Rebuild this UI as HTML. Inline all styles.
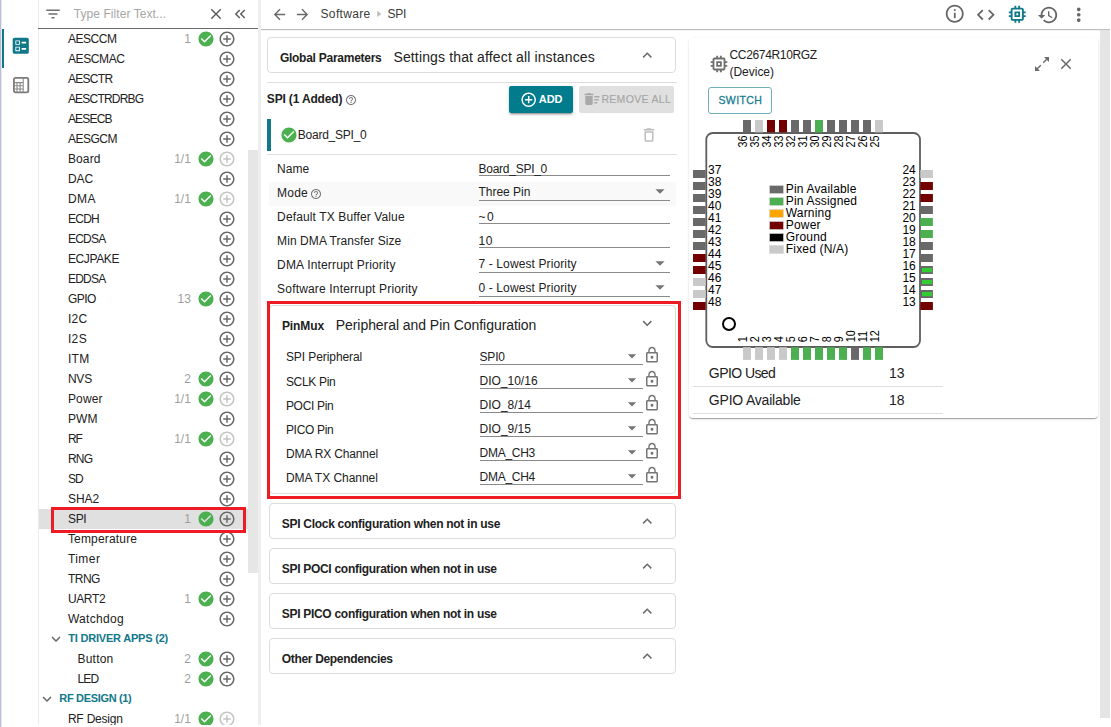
<!DOCTYPE html>
<html><head><meta charset="utf-8"><title>SysConfig</title>
<style>
html,body{margin:0;padding:0;background:#fff;}
body{width:1111px;height:727px;position:relative;overflow:hidden;font-family:"Liberation Sans", sans-serif;}
.a{position:absolute;display:block}
.t{position:absolute;white-space:pre;font-family:"Liberation Sans", sans-serif;}
</style></head><body>
<div class="a" style="left:0px;top:0px;width:1px;height:727px;background:#b9bdd8"></div>
<div class="a" style="left:1px;top:0px;width:1px;height:727px;background:#e9eaf2"></div>
<div class="a" style="left:2px;top:29px;width:2px;height:39px;background:#11788a"></div>
<svg class="a" style="left:10.25px;top:35.25px" width="21.5" height="21.5" viewBox="0 0 24 24"><path fill="#11788a" d="M13 9.5h5v-2h-5v2zm0 7h5v-2h-5v2zm6 4.5H5c-1.1 0-2-.9-2-2V5c0-1.1.9-2 2-2h14c1.1 0 2 .9 2 2v14c0 1.1-.9 2-2 2zM6 11h5V6H6v5zm1-4h3v3H7V7zM6 18h5v-5H6v5zm1-4h3v3H7v-3z"/></svg>
<svg class="a" style="left:12px;top:76px" width="18" height="18" viewBox="0 0 18 18"><rect x="1.9" y="1.9" width="14.4" height="14.4" rx="1.6" fill="none" stroke="#7a7a7a" stroke-width="1.8"/><path d="M11.2 2v14.2M2 6.6h9.2M5 6.6v9.6M8.1 6.6v9.6M2 9.8h9.2M2 13h9.2" fill="none" stroke="#8a8a8a" stroke-width="1.1"/></svg>
<div class="a" style="left:38px;top:0px;width:1px;height:727px;background:#ececec"></div>
<div class="a" style="left:38px;top:28px;width:220px;height:1px;background:#6a6a6a"></div>
<svg class="a" style="left:44.30px;top:5.00px" width="18" height="18" viewBox="0 0 24 24"><path fill="#6f6f6f" d="M10 18h4v-2h-4v2zM3 6v2h18V6H3zm3 7h12v-2H6v2z"/></svg>
<svg class="a" style="left:207.00px;top:5.20px" width="18" height="18" viewBox="0 0 24 24"><path fill="#5f5f5f" d="M19 6.41L17.59 5 12 10.59 6.41 5 5 6.41 10.59 12 5 17.59 6.41 19 12 13.41 17.59 19 19 17.59 13.41 12z"/></svg>
<svg class="a" style="left:231.30px;top:5.00px" width="18" height="18" viewBox="0 0 24 24"><path fill="#5f5f5f" d="M17.59 18L19 16.59 14.42 12 19 7.41 17.59 6l-6 6zM11 18l1.41-1.41L7.83 12l4.58-4.59L11 6l-6 6z"/></svg>
<div class="a" style="left:248px;top:150px;width:10px;height:423px;background:#e6e6e6"></div>
<div class="a" style="left:258px;top:0px;width:3px;height:727px;background:#eeeeee"></div>
<svg class="a" style="left:197.00px;top:30.00px" width="18" height="18" viewBox="0 0 24 24"><path fill="#4caf50" d="M12 2C6.48 2 2 6.48 2 12s4.48 10 10 10 10-4.48 10-10S17.52 2 12 2zm-2 15l-5-5 1.41-1.41L10 14.17l7.59-7.59L19 8l-9 9z"/></svg>
<svg class="a" style="left:218.00px;top:30.00px" width="18" height="18" viewBox="0 0 24 24"><path fill="#686868" d="M13 7h-2v4H7v2h4v4h2v-4h4v-2h-4V7zm-1-5C6.48 2 2 6.48 2 12s4.48 10 10 10 10-4.48 10-10S17.52 2 12 2zm0 18c-4.41 0-8-3.59-8-8s3.59-8 8-8 8 3.59 8 8-3.59 8-8 8z"/></svg>
<svg class="a" style="left:218.00px;top:50.00px" width="18" height="18" viewBox="0 0 24 24"><path fill="#686868" d="M13 7h-2v4H7v2h4v4h2v-4h4v-2h-4V7zm-1-5C6.48 2 2 6.48 2 12s4.48 10 10 10 10-4.48 10-10S17.52 2 12 2zm0 18c-4.41 0-8-3.59-8-8s3.59-8 8-8 8 3.59 8 8-3.59 8-8 8z"/></svg>
<svg class="a" style="left:218.00px;top:70.00px" width="18" height="18" viewBox="0 0 24 24"><path fill="#686868" d="M13 7h-2v4H7v2h4v4h2v-4h4v-2h-4V7zm-1-5C6.48 2 2 6.48 2 12s4.48 10 10 10 10-4.48 10-10S17.52 2 12 2zm0 18c-4.41 0-8-3.59-8-8s3.59-8 8-8 8 3.59 8 8-3.59 8-8 8z"/></svg>
<svg class="a" style="left:218.00px;top:90.00px" width="18" height="18" viewBox="0 0 24 24"><path fill="#686868" d="M13 7h-2v4H7v2h4v4h2v-4h4v-2h-4V7zm-1-5C6.48 2 2 6.48 2 12s4.48 10 10 10 10-4.48 10-10S17.52 2 12 2zm0 18c-4.41 0-8-3.59-8-8s3.59-8 8-8 8 3.59 8 8-3.59 8-8 8z"/></svg>
<svg class="a" style="left:218.00px;top:110.00px" width="18" height="18" viewBox="0 0 24 24"><path fill="#686868" d="M13 7h-2v4H7v2h4v4h2v-4h4v-2h-4V7zm-1-5C6.48 2 2 6.48 2 12s4.48 10 10 10 10-4.48 10-10S17.52 2 12 2zm0 18c-4.41 0-8-3.59-8-8s3.59-8 8-8 8 3.59 8 8-3.59 8-8 8z"/></svg>
<svg class="a" style="left:218.00px;top:130.00px" width="18" height="18" viewBox="0 0 24 24"><path fill="#686868" d="M13 7h-2v4H7v2h4v4h2v-4h4v-2h-4V7zm-1-5C6.48 2 2 6.48 2 12s4.48 10 10 10 10-4.48 10-10S17.52 2 12 2zm0 18c-4.41 0-8-3.59-8-8s3.59-8 8-8 8 3.59 8 8-3.59 8-8 8z"/></svg>
<svg class="a" style="left:197.00px;top:150.00px" width="18" height="18" viewBox="0 0 24 24"><path fill="#4caf50" d="M12 2C6.48 2 2 6.48 2 12s4.48 10 10 10 10-4.48 10-10S17.52 2 12 2zm-2 15l-5-5 1.41-1.41L10 14.17l7.59-7.59L19 8l-9 9z"/></svg>
<svg class="a" style="left:218.00px;top:150.00px" width="18" height="18" viewBox="0 0 24 24"><path fill="#c4c4c4" d="M13 7h-2v4H7v2h4v4h2v-4h4v-2h-4V7zm-1-5C6.48 2 2 6.48 2 12s4.48 10 10 10 10-4.48 10-10S17.52 2 12 2zm0 18c-4.41 0-8-3.59-8-8s3.59-8 8-8 8 3.59 8 8-3.59 8-8 8z"/></svg>
<svg class="a" style="left:218.00px;top:170.00px" width="18" height="18" viewBox="0 0 24 24"><path fill="#686868" d="M13 7h-2v4H7v2h4v4h2v-4h4v-2h-4V7zm-1-5C6.48 2 2 6.48 2 12s4.48 10 10 10 10-4.48 10-10S17.52 2 12 2zm0 18c-4.41 0-8-3.59-8-8s3.59-8 8-8 8 3.59 8 8-3.59 8-8 8z"/></svg>
<svg class="a" style="left:197.00px;top:190.00px" width="18" height="18" viewBox="0 0 24 24"><path fill="#4caf50" d="M12 2C6.48 2 2 6.48 2 12s4.48 10 10 10 10-4.48 10-10S17.52 2 12 2zm-2 15l-5-5 1.41-1.41L10 14.17l7.59-7.59L19 8l-9 9z"/></svg>
<svg class="a" style="left:218.00px;top:190.00px" width="18" height="18" viewBox="0 0 24 24"><path fill="#c4c4c4" d="M13 7h-2v4H7v2h4v4h2v-4h4v-2h-4V7zm-1-5C6.48 2 2 6.48 2 12s4.48 10 10 10 10-4.48 10-10S17.52 2 12 2zm0 18c-4.41 0-8-3.59-8-8s3.59-8 8-8 8 3.59 8 8-3.59 8-8 8z"/></svg>
<svg class="a" style="left:218.00px;top:210.00px" width="18" height="18" viewBox="0 0 24 24"><path fill="#686868" d="M13 7h-2v4H7v2h4v4h2v-4h4v-2h-4V7zm-1-5C6.48 2 2 6.48 2 12s4.48 10 10 10 10-4.48 10-10S17.52 2 12 2zm0 18c-4.41 0-8-3.59-8-8s3.59-8 8-8 8 3.59 8 8-3.59 8-8 8z"/></svg>
<svg class="a" style="left:218.00px;top:230.00px" width="18" height="18" viewBox="0 0 24 24"><path fill="#686868" d="M13 7h-2v4H7v2h4v4h2v-4h4v-2h-4V7zm-1-5C6.48 2 2 6.48 2 12s4.48 10 10 10 10-4.48 10-10S17.52 2 12 2zm0 18c-4.41 0-8-3.59-8-8s3.59-8 8-8 8 3.59 8 8-3.59 8-8 8z"/></svg>
<svg class="a" style="left:218.00px;top:250.00px" width="18" height="18" viewBox="0 0 24 24"><path fill="#686868" d="M13 7h-2v4H7v2h4v4h2v-4h4v-2h-4V7zm-1-5C6.48 2 2 6.48 2 12s4.48 10 10 10 10-4.48 10-10S17.52 2 12 2zm0 18c-4.41 0-8-3.59-8-8s3.59-8 8-8 8 3.59 8 8-3.59 8-8 8z"/></svg>
<svg class="a" style="left:218.00px;top:270.00px" width="18" height="18" viewBox="0 0 24 24"><path fill="#686868" d="M13 7h-2v4H7v2h4v4h2v-4h4v-2h-4V7zm-1-5C6.48 2 2 6.48 2 12s4.48 10 10 10 10-4.48 10-10S17.52 2 12 2zm0 18c-4.41 0-8-3.59-8-8s3.59-8 8-8 8 3.59 8 8-3.59 8-8 8z"/></svg>
<svg class="a" style="left:197.00px;top:290.00px" width="18" height="18" viewBox="0 0 24 24"><path fill="#4caf50" d="M12 2C6.48 2 2 6.48 2 12s4.48 10 10 10 10-4.48 10-10S17.52 2 12 2zm-2 15l-5-5 1.41-1.41L10 14.17l7.59-7.59L19 8l-9 9z"/></svg>
<svg class="a" style="left:218.00px;top:290.00px" width="18" height="18" viewBox="0 0 24 24"><path fill="#686868" d="M13 7h-2v4H7v2h4v4h2v-4h4v-2h-4V7zm-1-5C6.48 2 2 6.48 2 12s4.48 10 10 10 10-4.48 10-10S17.52 2 12 2zm0 18c-4.41 0-8-3.59-8-8s3.59-8 8-8 8 3.59 8 8-3.59 8-8 8z"/></svg>
<svg class="a" style="left:218.00px;top:310.00px" width="18" height="18" viewBox="0 0 24 24"><path fill="#686868" d="M13 7h-2v4H7v2h4v4h2v-4h4v-2h-4V7zm-1-5C6.48 2 2 6.48 2 12s4.48 10 10 10 10-4.48 10-10S17.52 2 12 2zm0 18c-4.41 0-8-3.59-8-8s3.59-8 8-8 8 3.59 8 8-3.59 8-8 8z"/></svg>
<svg class="a" style="left:218.00px;top:330.00px" width="18" height="18" viewBox="0 0 24 24"><path fill="#686868" d="M13 7h-2v4H7v2h4v4h2v-4h4v-2h-4V7zm-1-5C6.48 2 2 6.48 2 12s4.48 10 10 10 10-4.48 10-10S17.52 2 12 2zm0 18c-4.41 0-8-3.59-8-8s3.59-8 8-8 8 3.59 8 8-3.59 8-8 8z"/></svg>
<svg class="a" style="left:218.00px;top:350.00px" width="18" height="18" viewBox="0 0 24 24"><path fill="#686868" d="M13 7h-2v4H7v2h4v4h2v-4h4v-2h-4V7zm-1-5C6.48 2 2 6.48 2 12s4.48 10 10 10 10-4.48 10-10S17.52 2 12 2zm0 18c-4.41 0-8-3.59-8-8s3.59-8 8-8 8 3.59 8 8-3.59 8-8 8z"/></svg>
<svg class="a" style="left:197.00px;top:370.00px" width="18" height="18" viewBox="0 0 24 24"><path fill="#4caf50" d="M12 2C6.48 2 2 6.48 2 12s4.48 10 10 10 10-4.48 10-10S17.52 2 12 2zm-2 15l-5-5 1.41-1.41L10 14.17l7.59-7.59L19 8l-9 9z"/></svg>
<svg class="a" style="left:218.00px;top:370.00px" width="18" height="18" viewBox="0 0 24 24"><path fill="#686868" d="M13 7h-2v4H7v2h4v4h2v-4h4v-2h-4V7zm-1-5C6.48 2 2 6.48 2 12s4.48 10 10 10 10-4.48 10-10S17.52 2 12 2zm0 18c-4.41 0-8-3.59-8-8s3.59-8 8-8 8 3.59 8 8-3.59 8-8 8z"/></svg>
<svg class="a" style="left:197.00px;top:390.00px" width="18" height="18" viewBox="0 0 24 24"><path fill="#4caf50" d="M12 2C6.48 2 2 6.48 2 12s4.48 10 10 10 10-4.48 10-10S17.52 2 12 2zm-2 15l-5-5 1.41-1.41L10 14.17l7.59-7.59L19 8l-9 9z"/></svg>
<svg class="a" style="left:218.00px;top:390.00px" width="18" height="18" viewBox="0 0 24 24"><path fill="#c4c4c4" d="M13 7h-2v4H7v2h4v4h2v-4h4v-2h-4V7zm-1-5C6.48 2 2 6.48 2 12s4.48 10 10 10 10-4.48 10-10S17.52 2 12 2zm0 18c-4.41 0-8-3.59-8-8s3.59-8 8-8 8 3.59 8 8-3.59 8-8 8z"/></svg>
<svg class="a" style="left:218.00px;top:410.00px" width="18" height="18" viewBox="0 0 24 24"><path fill="#686868" d="M13 7h-2v4H7v2h4v4h2v-4h4v-2h-4V7zm-1-5C6.48 2 2 6.48 2 12s4.48 10 10 10 10-4.48 10-10S17.52 2 12 2zm0 18c-4.41 0-8-3.59-8-8s3.59-8 8-8 8 3.59 8 8-3.59 8-8 8z"/></svg>
<svg class="a" style="left:197.00px;top:430.00px" width="18" height="18" viewBox="0 0 24 24"><path fill="#4caf50" d="M12 2C6.48 2 2 6.48 2 12s4.48 10 10 10 10-4.48 10-10S17.52 2 12 2zm-2 15l-5-5 1.41-1.41L10 14.17l7.59-7.59L19 8l-9 9z"/></svg>
<svg class="a" style="left:218.00px;top:430.00px" width="18" height="18" viewBox="0 0 24 24"><path fill="#c4c4c4" d="M13 7h-2v4H7v2h4v4h2v-4h4v-2h-4V7zm-1-5C6.48 2 2 6.48 2 12s4.48 10 10 10 10-4.48 10-10S17.52 2 12 2zm0 18c-4.41 0-8-3.59-8-8s3.59-8 8-8 8 3.59 8 8-3.59 8-8 8z"/></svg>
<svg class="a" style="left:218.00px;top:450.00px" width="18" height="18" viewBox="0 0 24 24"><path fill="#686868" d="M13 7h-2v4H7v2h4v4h2v-4h4v-2h-4V7zm-1-5C6.48 2 2 6.48 2 12s4.48 10 10 10 10-4.48 10-10S17.52 2 12 2zm0 18c-4.41 0-8-3.59-8-8s3.59-8 8-8 8 3.59 8 8-3.59 8-8 8z"/></svg>
<svg class="a" style="left:218.00px;top:470.00px" width="18" height="18" viewBox="0 0 24 24"><path fill="#686868" d="M13 7h-2v4H7v2h4v4h2v-4h4v-2h-4V7zm-1-5C6.48 2 2 6.48 2 12s4.48 10 10 10 10-4.48 10-10S17.52 2 12 2zm0 18c-4.41 0-8-3.59-8-8s3.59-8 8-8 8 3.59 8 8-3.59 8-8 8z"/></svg>
<svg class="a" style="left:218.00px;top:490.00px" width="18" height="18" viewBox="0 0 24 24"><path fill="#686868" d="M13 7h-2v4H7v2h4v4h2v-4h4v-2h-4V7zm-1-5C6.48 2 2 6.48 2 12s4.48 10 10 10 10-4.48 10-10S17.52 2 12 2zm0 18c-4.41 0-8-3.59-8-8s3.59-8 8-8 8 3.59 8 8-3.59 8-8 8z"/></svg>
<div class="a" style="left:39px;top:509px;width:209px;height:20px;background:#e0e0e0"></div>
<svg class="a" style="left:197.00px;top:510.00px" width="18" height="18" viewBox="0 0 24 24"><path fill="#4caf50" d="M12 2C6.48 2 2 6.48 2 12s4.48 10 10 10 10-4.48 10-10S17.52 2 12 2zm-2 15l-5-5 1.41-1.41L10 14.17l7.59-7.59L19 8l-9 9z"/></svg>
<svg class="a" style="left:218.00px;top:510.00px" width="18" height="18" viewBox="0 0 24 24"><path fill="#686868" d="M13 7h-2v4H7v2h4v4h2v-4h4v-2h-4V7zm-1-5C6.48 2 2 6.48 2 12s4.48 10 10 10 10-4.48 10-10S17.52 2 12 2zm0 18c-4.41 0-8-3.59-8-8s3.59-8 8-8 8 3.59 8 8-3.59 8-8 8z"/></svg>
<svg class="a" style="left:218.00px;top:530.00px" width="18" height="18" viewBox="0 0 24 24"><path fill="#686868" d="M13 7h-2v4H7v2h4v4h2v-4h4v-2h-4V7zm-1-5C6.48 2 2 6.48 2 12s4.48 10 10 10 10-4.48 10-10S17.52 2 12 2zm0 18c-4.41 0-8-3.59-8-8s3.59-8 8-8 8 3.59 8 8-3.59 8-8 8z"/></svg>
<svg class="a" style="left:218.00px;top:550.00px" width="18" height="18" viewBox="0 0 24 24"><path fill="#686868" d="M13 7h-2v4H7v2h4v4h2v-4h4v-2h-4V7zm-1-5C6.48 2 2 6.48 2 12s4.48 10 10 10 10-4.48 10-10S17.52 2 12 2zm0 18c-4.41 0-8-3.59-8-8s3.59-8 8-8 8 3.59 8 8-3.59 8-8 8z"/></svg>
<svg class="a" style="left:218.00px;top:570.00px" width="18" height="18" viewBox="0 0 24 24"><path fill="#686868" d="M13 7h-2v4H7v2h4v4h2v-4h4v-2h-4V7zm-1-5C6.48 2 2 6.48 2 12s4.48 10 10 10 10-4.48 10-10S17.52 2 12 2zm0 18c-4.41 0-8-3.59-8-8s3.59-8 8-8 8 3.59 8 8-3.59 8-8 8z"/></svg>
<svg class="a" style="left:197.00px;top:590.00px" width="18" height="18" viewBox="0 0 24 24"><path fill="#4caf50" d="M12 2C6.48 2 2 6.48 2 12s4.48 10 10 10 10-4.48 10-10S17.52 2 12 2zm-2 15l-5-5 1.41-1.41L10 14.17l7.59-7.59L19 8l-9 9z"/></svg>
<svg class="a" style="left:218.00px;top:590.00px" width="18" height="18" viewBox="0 0 24 24"><path fill="#686868" d="M13 7h-2v4H7v2h4v4h2v-4h4v-2h-4V7zm-1-5C6.48 2 2 6.48 2 12s4.48 10 10 10 10-4.48 10-10S17.52 2 12 2zm0 18c-4.41 0-8-3.59-8-8s3.59-8 8-8 8 3.59 8 8-3.59 8-8 8z"/></svg>
<svg class="a" style="left:218.00px;top:610.00px" width="18" height="18" viewBox="0 0 24 24"><path fill="#686868" d="M13 7h-2v4H7v2h4v4h2v-4h4v-2h-4V7zm-1-5C6.48 2 2 6.48 2 12s4.48 10 10 10 10-4.48 10-10S17.52 2 12 2zm0 18c-4.41 0-8-3.59-8-8s3.59-8 8-8 8 3.59 8 8-3.59 8-8 8z"/></svg>
<svg class="a" style="left:47.10px;top:629.80px" width="18" height="18" viewBox="0 0 24 24"><path fill="#666" d="M16.59 8.59L12 13.17 7.41 8.59 6 10l6 6 6-6z"/></svg>
<svg class="a" style="left:197.00px;top:650.00px" width="18" height="18" viewBox="0 0 24 24"><path fill="#4caf50" d="M12 2C6.48 2 2 6.48 2 12s4.48 10 10 10 10-4.48 10-10S17.52 2 12 2zm-2 15l-5-5 1.41-1.41L10 14.17l7.59-7.59L19 8l-9 9z"/></svg>
<svg class="a" style="left:218.00px;top:650.00px" width="18" height="18" viewBox="0 0 24 24"><path fill="#686868" d="M13 7h-2v4H7v2h4v4h2v-4h4v-2h-4V7zm-1-5C6.48 2 2 6.48 2 12s4.48 10 10 10 10-4.48 10-10S17.52 2 12 2zm0 18c-4.41 0-8-3.59-8-8s3.59-8 8-8 8 3.59 8 8-3.59 8-8 8z"/></svg>
<svg class="a" style="left:197.00px;top:670.00px" width="18" height="18" viewBox="0 0 24 24"><path fill="#4caf50" d="M12 2C6.48 2 2 6.48 2 12s4.48 10 10 10 10-4.48 10-10S17.52 2 12 2zm-2 15l-5-5 1.41-1.41L10 14.17l7.59-7.59L19 8l-9 9z"/></svg>
<svg class="a" style="left:218.00px;top:670.00px" width="18" height="18" viewBox="0 0 24 24"><path fill="#686868" d="M13 7h-2v4H7v2h4v4h2v-4h4v-2h-4V7zm-1-5C6.48 2 2 6.48 2 12s4.48 10 10 10 10-4.48 10-10S17.52 2 12 2zm0 18c-4.41 0-8-3.59-8-8s3.59-8 8-8 8 3.59 8 8-3.59 8-8 8z"/></svg>
<svg class="a" style="left:38.10px;top:689.80px" width="18" height="18" viewBox="0 0 24 24"><path fill="#666" d="M16.59 8.59L12 13.17 7.41 8.59 6 10l6 6 6-6z"/></svg>
<svg class="a" style="left:197.00px;top:710.00px" width="18" height="18" viewBox="0 0 24 24"><path fill="#4caf50" d="M12 2C6.48 2 2 6.48 2 12s4.48 10 10 10 10-4.48 10-10S17.52 2 12 2zm-2 15l-5-5 1.41-1.41L10 14.17l7.59-7.59L19 8l-9 9z"/></svg>
<svg class="a" style="left:218.00px;top:710.00px" width="18" height="18" viewBox="0 0 24 24"><path fill="#c4c4c4" d="M13 7h-2v4H7v2h4v4h2v-4h4v-2h-4V7zm-1-5C6.48 2 2 6.48 2 12s4.48 10 10 10 10-4.48 10-10S17.52 2 12 2zm0 18c-4.41 0-8-3.59-8-8s3.59-8 8-8 8 3.59 8 8-3.59 8-8 8z"/></svg>
<div class="a" style="left:51px;top:507px;width:189px;height:20px;border:3px solid #ed1c24"></div>
<div class="a" style="left:261px;top:29px;width:849px;height:1px;background:#bdbdbd"></div>
<div class="a" style="left:261px;top:30px;width:839px;height:1px;background:#f4f4f4"></div>
<svg class="a" style="left:270.70px;top:5.50px" width="17" height="17" viewBox="0 0 24 24"><path fill="#6a6a6a" d="M20 11H7.83l5.59-5.59L12 4l-8 8 8 8 1.41-1.41L7.83 13H20v-2z"/></svg>
<svg class="a" style="left:294.30px;top:5.50px" width="17" height="17" viewBox="0 0 24 24"><path fill="#6a6a6a" d="M12 4l-1.41 1.41L16.17 11H4v2h12.17l-5.58 5.59L12 20l8-8z"/></svg>
<svg class="a" style="left:376px;top:9px" width="8" height="10" viewBox="0 0 8 10"><path d="M1.2 1.7L5.4 4.9L1.2 8.1z" fill="#bdbdbd"/></svg>
<svg class="a" style="left:944.25px;top:3.45px" width="21.5" height="21.5" viewBox="0 0 24 24"><path fill="#666" d="M11 17h2v-6h-2v6zm1-15C6.48 2 2 6.48 2 12s4.48 10 10 10 10-4.48 10-10S17.52 2 12 2zm0 18c-4.41 0-8-3.59-8-8s3.59-8 8-8 8 3.59 8 8-3.59 8-8 8zM11 9h2V7h-2v2z"/></svg>
<svg class="a" style="left:975.25px;top:3.75px" width="21.5" height="21.5" viewBox="0 0 24 24"><path fill="#666" d="M9.4 16.6L4.8 12l4.6-4.6L8 6l-6 6 6 6 1.4-1.4zm5.2 0l4.6-4.6-4.6-4.6L16 6l6 6-6 6-1.4-1.4z"/></svg>
<svg class="a" style="left:1005.95px;top:2.95px" width="22.5" height="22.5" viewBox="0 0 24 24"><path fill="#11788a" d="M15 9H9v6h6V9zm-2 4h-2v-2h2v2zm8-2V9h-2V7c0-1.1-.9-2-2-2h-2V3h-2v2h-2V3H9v2H7c-1.1 0-2 .9-2 2v2H3v2h2v2H3v2h2v2c0 1.1.9 2 2 2h2v2h2v-2h2v2h2v-2h2c1.1 0 2-.9 2-2v-2h2v-2h-2v-2h2zm-4 6H7V7h10v10z"/></svg>
<svg class="a" style="left:1036.80px;top:3.50px" width="22" height="22" viewBox="0 0 24 24"><path fill="#666" d="M13 3c-4.97 0-9 4.03-9 9H1l3.89 3.89.07.14L9 12H6c0-3.87 3.13-7 7-7s7 3.13 7 7-3.13 7-7 7c-1.93 0-3.68-.79-4.94-2.06l-1.42 1.42C8.27 19.99 10.51 21 13 21c4.97 0 9-4.03 9-9s-4.03-9-9-9zm-1 5v5l4.28 2.54.72-1.21-3.5-2.08V8H12z"/></svg>
<svg class="a" style="left:1068.25px;top:3.75px" width="21.5" height="21.5" viewBox="0 0 24 24"><path fill="#666" d="M12 8c1.1 0 2-.9 2-2s-.9-2-2-2-2 .9-2 2 .9 2 2 2zm0 2c-1.1 0-2 .9-2 2s.9 2 2 2 2-.9 2-2-.9-2-2-2zm0 6c-1.1 0-2 .9-2 2s.9 2 2 2 2-.9 2-2-.9-2-2-2z"/></svg>
<div class="a" style="left:1100px;top:30px;width:10px;height:688px;background:#e5e5e5"></div>
<div class="a" style="left:267px;top:37px;width:409px;height:36px;border:1px solid #dcdcdc;border-radius:4px;background:#fff;box-sizing:border-box"></div>
<svg class="a" style="left:638.05px;top:46.05px" width="18.5" height="18.5" viewBox="0 0 24 24"><path fill="#6a6a6a" d="M12 8l-6 6 1.41 1.41L12 10.83l4.59 4.58L18 14z"/></svg>
<div class="a" style="left:267px;top:82px;width:410px;height:1px;background:#dddddd"></div>
<svg class="a" style="left:345.00px;top:94.20px" width="12" height="12" viewBox="0 0 24 24"><path fill="#757575" d="M11 18h2v-2h-2v2zm1-16C6.48 2 2 6.48 2 12s4.48 10 10 10 10-4.48 10-10S17.52 2 12 2zm0 18c-4.41 0-8-3.59-8-8s3.59-8 8-8 8 3.59 8 8-3.59 8-8 8zm0-14c-2.21 0-4 1.79-4 4h2c0-1.1.9-2 2-2s2 .9 2 2c0 2-3 1.75-3 5h2c0-2.25 3-2.5 3-5 0-2.21-1.79-4-4-4z"/></svg>
<div class="a" style="left:509px;top:86px;width:64px;height:27px;background:#007c8c;border-radius:2px;box-shadow:0 3px 1px -2px rgba(0,0,0,.2),0 2px 2px rgba(0,0,0,.14),0 1px 5px rgba(0,0,0,.12)"></div>
<svg class="a" style="left:520.40px;top:90.80px" width="17.4" height="17.4" viewBox="0 0 24 24"><path fill="#fff" d="M13 7h-2v4H7v2h4v4h2v-4h4v-2h-4V7zm-1-5C6.48 2 2 6.48 2 12s4.48 10 10 10 10-4.48 10-10S17.52 2 12 2zm0 18c-4.41 0-8-3.59-8-8s3.59-8 8-8 8 3.59 8 8-3.59 8-8 8z"/></svg>
<div class="a" style="left:579px;top:86px;width:95px;height:27px;background:#e0e0e0;border-radius:2px"></div>
<svg class="a" style="left:582.60px;top:90.00px" width="18" height="18" viewBox="0 0 24 24"><path fill="#a9a9a9" d="M15 16h4v2h-4zm0-8h7v2h-7zm0 4h6v2h-6zM3 18c0 1.1.9 2 2 2h6c1.1 0 2-.9 2-2V8H3v10zM14 5h-3l-1-1H6L5 5H2v2h12z"/></svg>
<div class="a" style="left:267px;top:119px;width:4px;height:32px;background:#11788a"></div>
<svg class="a" style="left:280.00px;top:126.00px" width="18" height="18" viewBox="0 0 24 24"><path fill="#4caf50" d="M12 2C6.48 2 2 6.48 2 12s4.48 10 10 10 10-4.48 10-10S17.52 2 12 2zm-2 15l-5-5 1.41-1.41L10 14.17l7.59-7.59L19 8l-9 9z"/></svg>
<svg class="a" style="left:640.00px;top:125.90px" width="18" height="18" viewBox="0 0 24 24"><path fill="#bdbdbd" d="M6 19c0 1.1.9 2 2 2h8c1.1 0 2-.9 2-2V7H6v12zM8 9h8v10H8V9zm7.5-5l-1-1h-5l-1 1H5v2h14V4z"/></svg>
<div class="a" style="left:267px;top:154px;width:410px;height:1px;background:#dddddd"></div>
<div class="a" style="left:269px;top:182px;width:407px;height:24px;background:#f9f9f9"></div>
<div class="a" style="left:479px;top:175px;width:191px;height:1px;background:#8a8a8a"></div>
<div class="a" style="left:479px;top:200px;width:191px;height:1px;background:#8a8a8a"></div>
<svg class="a" style="left:648.60px;top:179.90px" width="22" height="22" viewBox="0 0 24 24"><path fill="#757575" d="M7 10l5 5 5-5z"/></svg>
<div class="a" style="left:479px;top:223px;width:191px;height:1px;background:#8a8a8a"></div>
<div class="a" style="left:479px;top:247px;width:191px;height:1px;background:#8a8a8a"></div>
<div class="a" style="left:479px;top:272px;width:191px;height:1px;background:#8a8a8a"></div>
<svg class="a" style="left:648.60px;top:251.90px" width="22" height="22" viewBox="0 0 24 24"><path fill="#757575" d="M7 10l5 5 5-5z"/></svg>
<div class="a" style="left:479px;top:296px;width:191px;height:1px;background:#8a8a8a"></div>
<svg class="a" style="left:648.60px;top:275.90px" width="22" height="22" viewBox="0 0 24 24"><path fill="#757575" d="M7 10l5 5 5-5z"/></svg>
<svg class="a" style="left:309.80px;top:188.00px" width="12" height="12" viewBox="0 0 24 24"><path fill="#757575" d="M11 18h2v-2h-2v2zm1-16C6.48 2 2 6.48 2 12s4.48 10 10 10 10-4.48 10-10S17.52 2 12 2zm0 18c-4.41 0-8-3.59-8-8s3.59-8 8-8 8 3.59 8 8-3.59 8-8 8zm0-14c-2.21 0-4 1.79-4 4h2c0-1.1.9-2 2-2s2 .9 2 2c0 2-3 1.75-3 5h2c0-2.25 3-2.5 3-5 0-2.21-1.79-4-4-4z"/></svg>
<div class="a" style="left:269px;top:305px;width:407px;height:189px;border:1px solid #dcdcdc;border-radius:4px;background:#fff;box-sizing:border-box"></div>
<svg class="a" style="left:637.75px;top:313.95px" width="18.5" height="18.5" viewBox="0 0 24 24"><path fill="#6a6a6a" d="M16.59 8.59L12 13.17 7.41 8.59 6 10l6 6 6-6z"/></svg>
<div class="a" style="left:480px;top:364px;width:163px;height:1px;background:#8a8a8a"></div>
<svg class="a" style="left:622.10px;top:345.80px" width="20" height="20" viewBox="0 0 24 24"><path fill="#757575" d="M7 10l5 5 5-5z"/></svg>
<svg class="a" style="left:643.00px;top:345.80px" width="18" height="18" viewBox="0 0 24 24"><path fill="#757575" d="M12 17c1.1 0 2-.9 2-2s-.9-2-2-2-2 .9-2 2 .9 2 2 2zm6-9h-1V6c0-2.76-2.24-5-5-5S7 3.24 7 6v2H6c-1.1 0-2 .9-2 2v10c0 1.1.9 2 2 2h12c1.1 0 2-.9 2-2V10c0-1.1-.9-2-2-2zM8.9 6c0-1.71 1.39-3.1 3.1-3.1s3.1 1.39 3.1 3.1v2H8.9V6zM18 20H6V10h12v10z"/></svg>
<div class="a" style="left:480px;top:388px;width:163px;height:1px;background:#8a8a8a"></div>
<svg class="a" style="left:622.10px;top:369.80px" width="20" height="20" viewBox="0 0 24 24"><path fill="#757575" d="M7 10l5 5 5-5z"/></svg>
<svg class="a" style="left:643.00px;top:369.80px" width="18" height="18" viewBox="0 0 24 24"><path fill="#757575" d="M12 17c1.1 0 2-.9 2-2s-.9-2-2-2-2 .9-2 2 .9 2 2 2zm6-9h-1V6c0-2.76-2.24-5-5-5S7 3.24 7 6v2H6c-1.1 0-2 .9-2 2v10c0 1.1.9 2 2 2h12c1.1 0 2-.9 2-2V10c0-1.1-.9-2-2-2zM8.9 6c0-1.71 1.39-3.1 3.1-3.1s3.1 1.39 3.1 3.1v2H8.9V6zM18 20H6V10h12v10z"/></svg>
<div class="a" style="left:480px;top:412px;width:163px;height:1px;background:#8a8a8a"></div>
<svg class="a" style="left:622.10px;top:393.80px" width="20" height="20" viewBox="0 0 24 24"><path fill="#757575" d="M7 10l5 5 5-5z"/></svg>
<svg class="a" style="left:643.00px;top:393.80px" width="18" height="18" viewBox="0 0 24 24"><path fill="#757575" d="M12 17c1.1 0 2-.9 2-2s-.9-2-2-2-2 .9-2 2 .9 2 2 2zm6-9h-1V6c0-2.76-2.24-5-5-5S7 3.24 7 6v2H6c-1.1 0-2 .9-2 2v10c0 1.1.9 2 2 2h12c1.1 0 2-.9 2-2V10c0-1.1-.9-2-2-2zM8.9 6c0-1.71 1.39-3.1 3.1-3.1s3.1 1.39 3.1 3.1v2H8.9V6zM18 20H6V10h12v10z"/></svg>
<div class="a" style="left:480px;top:436px;width:163px;height:1px;background:#8a8a8a"></div>
<svg class="a" style="left:622.10px;top:417.80px" width="20" height="20" viewBox="0 0 24 24"><path fill="#757575" d="M7 10l5 5 5-5z"/></svg>
<svg class="a" style="left:643.00px;top:417.80px" width="18" height="18" viewBox="0 0 24 24"><path fill="#757575" d="M12 17c1.1 0 2-.9 2-2s-.9-2-2-2-2 .9-2 2 .9 2 2 2zm6-9h-1V6c0-2.76-2.24-5-5-5S7 3.24 7 6v2H6c-1.1 0-2 .9-2 2v10c0 1.1.9 2 2 2h12c1.1 0 2-.9 2-2V10c0-1.1-.9-2-2-2zM8.9 6c0-1.71 1.39-3.1 3.1-3.1s3.1 1.39 3.1 3.1v2H8.9V6zM18 20H6V10h12v10z"/></svg>
<div class="a" style="left:480px;top:460px;width:163px;height:1px;background:#8a8a8a"></div>
<svg class="a" style="left:622.10px;top:441.80px" width="20" height="20" viewBox="0 0 24 24"><path fill="#757575" d="M7 10l5 5 5-5z"/></svg>
<svg class="a" style="left:643.00px;top:441.80px" width="18" height="18" viewBox="0 0 24 24"><path fill="#757575" d="M12 17c1.1 0 2-.9 2-2s-.9-2-2-2-2 .9-2 2 .9 2 2 2zm6-9h-1V6c0-2.76-2.24-5-5-5S7 3.24 7 6v2H6c-1.1 0-2 .9-2 2v10c0 1.1.9 2 2 2h12c1.1 0 2-.9 2-2V10c0-1.1-.9-2-2-2zM8.9 6c0-1.71 1.39-3.1 3.1-3.1s3.1 1.39 3.1 3.1v2H8.9V6zM18 20H6V10h12v10z"/></svg>
<div class="a" style="left:480px;top:484px;width:163px;height:1px;background:#8a8a8a"></div>
<svg class="a" style="left:622.10px;top:465.80px" width="20" height="20" viewBox="0 0 24 24"><path fill="#757575" d="M7 10l5 5 5-5z"/></svg>
<svg class="a" style="left:643.00px;top:465.80px" width="18" height="18" viewBox="0 0 24 24"><path fill="#757575" d="M12 17c1.1 0 2-.9 2-2s-.9-2-2-2-2 .9-2 2 .9 2 2 2zm6-9h-1V6c0-2.76-2.24-5-5-5S7 3.24 7 6v2H6c-1.1 0-2 .9-2 2v10c0 1.1.9 2 2 2h12c1.1 0 2-.9 2-2V10c0-1.1-.9-2-2-2zM8.9 6c0-1.71 1.39-3.1 3.1-3.1s3.1 1.39 3.1 3.1v2H8.9V6zM18 20H6V10h12v10z"/></svg>
<div class="a" style="left:267px;top:301px;width:408px;height:192px;border:3px solid #ed1c24"></div>
<div class="a" style="left:269px;top:503px;width:407px;height:36px;border:1px solid #dcdcdc;border-radius:4px;background:#fff;box-sizing:border-box"></div>
<svg class="a" style="left:637.95px;top:511.75px" width="18.5" height="18.5" viewBox="0 0 24 24"><path fill="#6a6a6a" d="M12 8l-6 6 1.41 1.41L12 10.83l4.59 4.58L18 14z"/></svg>
<div class="a" style="left:269px;top:548px;width:407px;height:36px;border:1px solid #dcdcdc;border-radius:4px;background:#fff;box-sizing:border-box"></div>
<svg class="a" style="left:637.95px;top:556.75px" width="18.5" height="18.5" viewBox="0 0 24 24"><path fill="#6a6a6a" d="M12 8l-6 6 1.41 1.41L12 10.83l4.59 4.58L18 14z"/></svg>
<div class="a" style="left:269px;top:593px;width:407px;height:36px;border:1px solid #dcdcdc;border-radius:4px;background:#fff;box-sizing:border-box"></div>
<svg class="a" style="left:637.95px;top:601.75px" width="18.5" height="18.5" viewBox="0 0 24 24"><path fill="#6a6a6a" d="M12 8l-6 6 1.41 1.41L12 10.83l4.59 4.58L18 14z"/></svg>
<div class="a" style="left:269px;top:638px;width:407px;height:36px;border:1px solid #dcdcdc;border-radius:4px;background:#fff;box-sizing:border-box"></div>
<svg class="a" style="left:637.95px;top:646.75px" width="18.5" height="18.5" viewBox="0 0 24 24"><path fill="#6a6a6a" d="M12 8l-6 6 1.41 1.41L12 10.83l4.59 4.58L18 14z"/></svg>
<div class="a" style="left:688.5px;top:37.5px;width:409px;height:380.5px;background:#fff;border-radius:4px;box-shadow:0 2px 1px -1px rgba(0,0,0,.2),0 1px 1px rgba(0,0,0,.14),0 1px 3px rgba(0,0,0,.12)"></div>
<svg class="a" style="left:708.00px;top:53.00px" width="22" height="22" viewBox="0 0 24 24"><path fill="#6f6f6f" d="M15 9H9v6h6V9zm-2 4h-2v-2h2v2zm8-2V9h-2V7c0-1.1-.9-2-2-2h-2V3h-2v2h-2V3H9v2H7c-1.1 0-2 .9-2 2v2H3v2h2v2H3v2h2v2c0 1.1.9 2 2 2h2v2h2v-2h2v2h2v-2h2c1.1 0 2-.9 2-2v-2h2v-2h-2v-2h2zm-4 6H7V7h10v10z"/></svg>
<svg class="a" style="left:1033px;top:55px" width="18" height="18" viewBox="0 0 18 18"><path d="M10.2 7.8L15.3 2.7M2.7 15.3L7.8 10.2" stroke="#6a6a6a" stroke-width="1.4" fill="none"/><path d="M11 2h5v5zM2 11v5h5z" fill="#6a6a6a"/></svg>
<svg class="a" style="left:1057.00px;top:55.00px" width="18" height="18" viewBox="0 0 24 24"><path fill="#6a6a6a" d="M19 6.41L17.59 5 12 10.59 6.41 5 5 6.41 10.59 12 5 17.59 6.41 19 12 13.41 17.59 19 19 17.59 13.41 12z"/></svg>
<div class="a" style="left:708px;top:87px;width:64px;height:27px;border:1px solid #6fb0bc;border-radius:3px;box-sizing:border-box"></div>
<svg class="a" style="left:688px;top:115px" width="270" height="250" viewBox="688 115 270 250" font-family='"Liberation Sans", sans-serif' font-size="12" fill="#000"><rect x="706.3" y="133" width="213.7" height="214" rx="6.5" fill="#fff" stroke="#5e5e5e" stroke-width="1.8"/><rect x="743" y="120" width="8" height="12.4" fill="#696969"/><rect x="755" y="120" width="8" height="12.4" fill="#c9c9c9"/><rect x="767" y="120" width="8" height="12.4" fill="#730000"/><rect x="779" y="120" width="8" height="12.4" fill="#730000"/><rect x="791" y="120" width="8" height="12.4" fill="#696969"/><rect x="803" y="120" width="8" height="12.4" fill="#696969"/><rect x="815" y="120" width="8" height="12.4" fill="#4caf50"/><rect x="827" y="120" width="8" height="12.4" fill="#696969"/><rect x="839" y="120" width="8" height="12.4" fill="#696969"/><rect x="851" y="120" width="8" height="12.4" fill="#696969"/><rect x="863" y="120" width="8" height="12.4" fill="#696969"/><rect x="875" y="120" width="8" height="12.4" fill="#c9c9c9"/><rect x="743" y="347.2" width="8" height="12.7" fill="#c9c9c9"/><rect x="755" y="347.2" width="8" height="12.7" fill="#c9c9c9"/><rect x="767" y="347.2" width="8" height="12.7" fill="#c9c9c9"/><rect x="779" y="347.2" width="8" height="12.7" fill="#c9c9c9"/><rect x="791" y="347.2" width="8" height="12.7" fill="#4caf50"/><rect x="803" y="347.2" width="8" height="12.7" fill="#4caf50"/><rect x="815" y="347.2" width="8" height="12.7" fill="#4caf50"/><rect x="827" y="347.2" width="8" height="12.7" fill="#4caf50"/><rect x="839" y="347.2" width="8" height="12.7" fill="#4caf50"/><rect x="851" y="347.2" width="8" height="12.7" fill="#696969"/><rect x="863" y="347.2" width="8" height="12.7" fill="#4caf50"/><rect x="875" y="347.2" width="8" height="12.7" fill="#4caf50"/><rect x="693" y="170" width="12.7" height="8" fill="#696969"/><rect x="693" y="182" width="12.7" height="8" fill="#696969"/><rect x="693" y="194" width="12.7" height="8" fill="#696969"/><rect x="693" y="206" width="12.7" height="8" fill="#696969"/><rect x="693" y="218" width="12.7" height="8" fill="#696969"/><rect x="693" y="230" width="12.7" height="8" fill="#696969"/><rect x="693" y="242" width="12.7" height="8" fill="#696969"/><rect x="693" y="254" width="12.7" height="8" fill="#730000"/><rect x="693" y="266" width="12.7" height="8" fill="#730000"/><rect x="693" y="278" width="12.7" height="8" fill="#c9c9c9"/><rect x="693" y="290" width="12.7" height="8" fill="#c9c9c9"/><rect x="693" y="302" width="12.7" height="8" fill="#730000"/><rect x="920.3" y="170" width="12.6" height="8" fill="#c9c9c9"/><rect x="920.3" y="182" width="12.6" height="8" fill="#730000"/><rect x="920.3" y="194" width="12.6" height="8" fill="#730000"/><rect x="920.3" y="206" width="12.6" height="8" fill="#696969"/><rect x="920.3" y="218" width="12.6" height="8" fill="#4caf50"/><rect x="920.3" y="230" width="12.6" height="8" fill="#4caf50"/><rect x="920.3" y="242" width="12.6" height="8" fill="#696969"/><rect x="920.3" y="254" width="12.6" height="8" fill="#696969"/><rect x="920.3" y="266" width="12.6" height="8" fill="#696969"/><rect x="922" y="268" width="10" height="4.2" fill="#32cd32"/><rect x="920.3" y="278" width="12.6" height="8" fill="#696969"/><rect x="922" y="280" width="10" height="4.2" fill="#32cd32"/><rect x="920.3" y="290" width="12.6" height="8" fill="#696969"/><rect x="922" y="292" width="10" height="4.2" fill="#32cd32"/><rect x="920.3" y="302" width="12.6" height="8" fill="#730000"/><text transform="translate(747.2,135.6) rotate(-90) scale(0.9,1.04)" text-anchor="end">36</text><text transform="translate(747.2,342.3) rotate(-90) scale(0.9,1.04)">1</text><text x="708" y="174">37</text><text x="915.8" y="174" text-anchor="end">24</text><text transform="translate(759.2,135.6) rotate(-90) scale(0.9,1.04)" text-anchor="end">35</text><text transform="translate(759.2,342.3) rotate(-90) scale(0.9,1.04)">2</text><text x="708" y="186">38</text><text x="915.8" y="186" text-anchor="end">23</text><text transform="translate(771.2,135.6) rotate(-90) scale(0.9,1.04)" text-anchor="end">34</text><text transform="translate(771.2,342.3) rotate(-90) scale(0.9,1.04)">3</text><text x="708" y="198">39</text><text x="915.8" y="198" text-anchor="end">22</text><text transform="translate(783.2,135.6) rotate(-90) scale(0.9,1.04)" text-anchor="end">33</text><text transform="translate(783.2,342.3) rotate(-90) scale(0.9,1.04)">4</text><text x="708" y="210">40</text><text x="915.8" y="210" text-anchor="end">21</text><text transform="translate(795.2,135.6) rotate(-90) scale(0.9,1.04)" text-anchor="end">32</text><text transform="translate(795.2,342.3) rotate(-90) scale(0.9,1.04)">5</text><text x="708" y="222">41</text><text x="915.8" y="222" text-anchor="end">20</text><text transform="translate(807.2,135.6) rotate(-90) scale(0.9,1.04)" text-anchor="end">31</text><text transform="translate(807.2,342.3) rotate(-90) scale(0.9,1.04)">6</text><text x="708" y="234">42</text><text x="915.8" y="234" text-anchor="end">19</text><text transform="translate(819.2,135.6) rotate(-90) scale(0.9,1.04)" text-anchor="end">30</text><text transform="translate(819.2,342.3) rotate(-90) scale(0.9,1.04)">7</text><text x="708" y="246">43</text><text x="915.8" y="246" text-anchor="end">18</text><text transform="translate(831.2,135.6) rotate(-90) scale(0.9,1.04)" text-anchor="end">29</text><text transform="translate(831.2,342.3) rotate(-90) scale(0.9,1.04)">8</text><text x="708" y="258">44</text><text x="915.8" y="258" text-anchor="end">17</text><text transform="translate(843.2,135.6) rotate(-90) scale(0.9,1.04)" text-anchor="end">28</text><text transform="translate(843.2,342.3) rotate(-90) scale(0.9,1.04)">9</text><text x="708" y="270">45</text><text x="915.8" y="270" text-anchor="end">16</text><text transform="translate(855.2,135.6) rotate(-90) scale(0.9,1.04)" text-anchor="end">27</text><text transform="translate(855.2,342.3) rotate(-90) scale(0.9,1.04)">10</text><text x="708" y="282">46</text><text x="915.8" y="282" text-anchor="end">15</text><text transform="translate(867.2,135.6) rotate(-90) scale(0.9,1.04)" text-anchor="end">26</text><text transform="translate(867.2,342.3) rotate(-90) scale(0.9,1.04)">11</text><text x="708" y="294">47</text><text x="915.8" y="294" text-anchor="end">14</text><text transform="translate(879.2,135.6) rotate(-90) scale(0.9,1.04)" text-anchor="end">25</text><text transform="translate(879.2,342.3) rotate(-90) scale(0.9,1.04)">12</text><text x="708" y="306">48</text><text x="915.8" y="306" text-anchor="end">13</text><circle cx="729" cy="324" r="6" fill="none" stroke="#000" stroke-width="2"/><rect x="769.5" y="185.5" width="14" height="8" fill="#696969" stroke="#d8d8d8" stroke-width="0.6"/><text x="785.8" y="193" letter-spacing="0.17">Pin Available</text><rect x="769.5" y="197.5" width="14" height="8" fill="#4caf50" stroke="#d8d8d8" stroke-width="0.6"/><text x="785.8" y="205" letter-spacing="0.17">Pin Assigned</text><rect x="769.5" y="209.5" width="14" height="8" fill="#ffa500" stroke="#d8d8d8" stroke-width="0.6"/><text x="785.8" y="217" letter-spacing="0.17">Warning</text><rect x="769.5" y="221.5" width="14" height="8" fill="#730000" stroke="#d8d8d8" stroke-width="0.6"/><text x="785.8" y="229" letter-spacing="0.17">Power</text><rect x="769.5" y="233.5" width="14" height="8" fill="#000" stroke="#d8d8d8" stroke-width="0.6"/><text x="785.8" y="241" letter-spacing="0.17">Ground</text><rect x="769.5" y="245.5" width="14" height="8" fill="#c9c9c9" stroke="#d8d8d8" stroke-width="0.6"/><text x="785.8" y="253" letter-spacing="0.17">Fixed (N/A)</text></svg>
<div class="a" style="left:693px;top:386px;width:250px;height:1px;background:#dedede"></div>
<div class="a" style="left:693px;top:413px;width:250px;height:1px;background:#dedede"></div>
<div class="t" style="top:6px;font-size:12px;line-height:16px;color:#a6a6a6;letter-spacing:0.057px;left:73.82px;">Type Filter Text...</div>
<div class="t" style="top:31px;font-size:12px;line-height:16px;color:#212121;letter-spacing:-0.473px;left:67.92px;">AESCCM</div>
<div class="t" style="top:31px;font-size:12px;line-height:16px;color:#9e9e9e;right:920.20px;">1</div>
<div class="t" style="top:51px;font-size:12px;line-height:16px;color:#212121;letter-spacing:-0.377px;left:67.92px;">AESCMAC</div>
<div class="t" style="top:71px;font-size:12px;line-height:16px;color:#212121;letter-spacing:-0.702px;left:67.92px;">AESCTR</div>
<div class="t" style="top:91px;font-size:12px;line-height:16px;color:#212121;letter-spacing:-0.796px;left:67.92px;">AESCTRDRBG</div>
<div class="t" style="top:111px;font-size:12px;line-height:16px;color:#212121;letter-spacing:-0.802px;left:67.92px;">AESECB</div>
<div class="t" style="top:131px;font-size:12px;line-height:16px;color:#212121;letter-spacing:-0.507px;left:67.92px;">AESGCM</div>
<div class="t" style="top:151px;font-size:12px;line-height:16px;color:#212121;letter-spacing:0.137px;left:67.92px;">Board</div>
<div class="t" style="top:151px;font-size:12px;line-height:16px;color:#9e9e9e;right:920.20px;">1/1</div>
<div class="t" style="top:171px;font-size:12px;line-height:16px;color:#212121;left:67.92px;">DAC</div>
<div class="t" style="top:191px;font-size:12px;line-height:16px;color:#212121;letter-spacing:0.454px;left:67.92px;">DMA</div>
<div class="t" style="top:191px;font-size:12px;line-height:16px;color:#9e9e9e;right:920.20px;">1/1</div>
<div class="t" style="top:211px;font-size:12px;line-height:16px;color:#212121;letter-spacing:-0.712px;left:67.92px;">ECDH</div>
<div class="t" style="top:231px;font-size:12px;line-height:16px;color:#212121;letter-spacing:-0.741px;left:67.92px;">ECDSA</div>
<div class="t" style="top:251px;font-size:12px;line-height:16px;color:#212121;letter-spacing:-0.386px;left:67.92px;">ECJPAKE</div>
<div class="t" style="top:271px;font-size:12px;line-height:16px;color:#212121;letter-spacing:-0.741px;left:67.92px;">EDDSA</div>
<div class="t" style="top:291px;font-size:12px;line-height:16px;color:#212121;letter-spacing:-0.545px;left:67.92px;">GPIO</div>
<div class="t" style="top:291px;font-size:12px;line-height:16px;color:#9e9e9e;right:920.20px;">13</div>
<div class="t" style="top:311px;font-size:12px;line-height:16px;color:#212121;letter-spacing:0.296px;left:67.92px;">I2C</div>
<div class="t" style="top:331px;font-size:12px;line-height:16px;color:#212121;letter-spacing:0.382px;left:67.92px;">I2S</div>
<div class="t" style="top:351px;font-size:12px;line-height:16px;color:#212121;letter-spacing:0.304px;left:67.92px;">ITM</div>
<div class="t" style="top:371px;font-size:12px;line-height:16px;color:#212121;letter-spacing:-0.204px;left:67.92px;">NVS</div>
<div class="t" style="top:371px;font-size:12px;line-height:16px;color:#9e9e9e;right:920.20px;">2</div>
<div class="t" style="top:391px;font-size:12px;line-height:16px;color:#212121;letter-spacing:0.166px;left:67.92px;">Power</div>
<div class="t" style="top:391px;font-size:12px;line-height:16px;color:#9e9e9e;right:920.20px;">1/1</div>
<div class="t" style="top:411px;font-size:12px;line-height:16px;color:#212121;letter-spacing:0.126px;left:67.92px;">PWM</div>
<div class="t" style="top:431px;font-size:12px;line-height:16px;color:#212121;letter-spacing:-1.020px;left:67.92px;">RF</div>
<div class="t" style="top:431px;font-size:12px;line-height:16px;color:#9e9e9e;right:920.20px;">1/1</div>
<div class="t" style="top:451px;font-size:12px;line-height:16px;color:#212121;letter-spacing:-0.796px;left:67.92px;">RNG</div>
<div class="t" style="top:471px;font-size:12px;line-height:16px;color:#212121;letter-spacing:-0.892px;left:67.92px;">SD</div>
<div class="t" style="top:491px;font-size:12px;line-height:16px;color:#212121;letter-spacing:0.007px;left:67.92px;">SHA2</div>
<div class="t" style="top:511px;font-size:12px;line-height:16px;color:#212121;letter-spacing:-0.282px;left:67.92px;">SPI</div>
<div class="t" style="top:511px;font-size:12px;line-height:16px;color:#9e9e9e;right:920.20px;">1</div>
<div class="t" style="top:531px;font-size:12px;line-height:16px;color:#212121;letter-spacing:0.170px;left:67.92px;">Temperature</div>
<div class="t" style="top:551px;font-size:12px;line-height:16px;color:#212121;letter-spacing:0.440px;left:67.92px;">Timer</div>
<div class="t" style="top:571px;font-size:12px;line-height:16px;color:#212121;letter-spacing:-0.507px;left:67.92px;">TRNG</div>
<div class="t" style="top:591px;font-size:12px;line-height:16px;color:#212121;letter-spacing:-0.361px;left:67.92px;">UART2</div>
<div class="t" style="top:591px;font-size:12px;line-height:16px;color:#9e9e9e;right:920.20px;">1</div>
<div class="t" style="top:611px;font-size:12px;line-height:16px;color:#212121;letter-spacing:0.298px;left:67.92px;">Watchdog</div>
<div class="t" style="top:630px;font-size:11px;line-height:16px;color:#11788a;font-weight:700;letter-spacing:-0.206px;left:68.26px;">TI DRIVER APPS (2)</div>
<div class="t" style="top:651px;font-size:12px;line-height:16px;color:#212121;letter-spacing:0.215px;left:77.52px;">Button</div>
<div class="t" style="top:651px;font-size:12px;line-height:16px;color:#9e9e9e;right:920.20px;">2</div>
<div class="t" style="top:671px;font-size:12px;line-height:16px;color:#212121;letter-spacing:-0.882px;left:77.52px;">LED</div>
<div class="t" style="top:671px;font-size:12px;line-height:16px;color:#9e9e9e;right:920.20px;">2</div>
<div class="t" style="top:690px;font-size:11px;line-height:16px;color:#11788a;font-weight:700;letter-spacing:-0.335px;left:59.36px;">RF DESIGN (1)</div>
<div class="t" style="top:711px;font-size:12px;line-height:16px;color:#212121;letter-spacing:-0.201px;left:67.92px;">RF Design</div>
<div class="t" style="top:711px;font-size:12px;line-height:16px;color:#9e9e9e;right:920.20px;">1/1</div>
<div class="t" style="top:6px;font-size:12px;line-height:16px;color:#3a3a3a;letter-spacing:0.346px;left:320.52px;">Software</div>
<div class="t" style="top:6px;font-size:12px;line-height:16px;color:#3a3a3a;letter-spacing:-0.282px;left:387.52px;">SPI</div>
<div class="t" style="top:50px;font-size:12px;line-height:16px;color:#212121;font-weight:700;letter-spacing:-0.261px;left:279.92px;">Global Parameters</div>
<div class="t" style="top:47px;font-size:14px;line-height:20px;color:#212121;letter-spacing:0.140px;left:393.44px;">Settings that affect all instances</div>
<div class="t" style="top:91px;font-size:12px;line-height:16px;color:#212121;font-weight:700;letter-spacing:-0.165px;left:266.82px;">SPI (1 Added)</div>
<div class="t" style="top:91px;font-size:11px;line-height:16px;color:#fff;font-weight:700;letter-spacing:-0.127px;left:538.86px;">ADD</div>
<div class="t" style="top:91px;font-size:10.5px;line-height:16px;color:#a6a6a6;letter-spacing:0.313px;-webkit-text-stroke:0.15px #a6a6a6;left:601.38px;">REMOVE ALL</div>
<div class="t" style="top:127px;font-size:12px;line-height:16px;color:#212121;letter-spacing:-0.231px;left:297.72px;">Board_SPI_0</div>
<div class="t" style="top:161px;font-size:12px;line-height:16px;color:#212121;letter-spacing:0.055px;left:277.12px;">Name</div>
<div class="t" style="top:161px;font-size:12px;line-height:16px;color:#212121;letter-spacing:-0.261px;left:478.52px;">Board_SPI_0</div>
<div class="t" style="top:185px;font-size:12px;line-height:16px;color:#212121;letter-spacing:0.183px;left:277.12px;">Mode</div>
<div class="t" style="top:184px;font-size:12px;line-height:16px;color:#212121;letter-spacing:-0.019px;left:478.52px;">Three Pin</div>
<div class="t" style="top:209px;font-size:12px;line-height:16px;color:#212121;letter-spacing:0.124px;left:277.12px;">Default TX Buffer Value</div>
<div class="t" style="top:209px;font-size:12px;line-height:16px;color:#212121;letter-spacing:1.500px;left:478.52px;">~0</div>
<div class="t" style="top:233px;font-size:12px;line-height:16px;color:#212121;letter-spacing:0.074px;left:277.12px;">Min DMA Transfer Size</div>
<div class="t" style="top:233px;font-size:12px;line-height:16px;color:#212121;letter-spacing:0.521px;left:478.52px;">10</div>
<div class="t" style="top:257px;font-size:12px;line-height:16px;color:#212121;letter-spacing:0.170px;left:277.12px;">DMA Interrupt Priority</div>
<div class="t" style="top:256px;font-size:12px;line-height:16px;color:#212121;letter-spacing:0.114px;left:478.52px;">7 - Lowest Priority</div>
<div class="t" style="top:281px;font-size:12px;line-height:16px;color:#212121;letter-spacing:0.170px;left:277.12px;">Software Interrupt Priority</div>
<div class="t" style="top:280px;font-size:12px;line-height:16px;color:#212121;letter-spacing:0.114px;left:478.52px;">0 - Lowest Priority</div>
<div class="t" style="top:318px;font-size:12px;line-height:16px;color:#212121;font-weight:700;letter-spacing:-0.098px;left:281.92px;">PinMux</div>
<div class="t" style="top:315px;font-size:14px;line-height:20px;color:#212121;letter-spacing:-0.055px;left:335.74px;">Peripheral and Pin Configuration</div>
<div class="t" style="top:349px;font-size:12px;line-height:16px;color:#212121;letter-spacing:-0.077px;left:285.92px;">SPI Peripheral</div>
<div class="t" style="top:349px;font-size:12px;line-height:16px;color:#212121;letter-spacing:-0.179px;left:479.52px;">SPI0</div>
<div class="t" style="top:374px;font-size:12px;line-height:16px;color:#212121;letter-spacing:-0.307px;left:285.92px;">SCLK Pin</div>
<div class="t" style="top:373px;font-size:12px;line-height:16px;color:#212121;left:479.52px;">DIO_10/16</div>
<div class="t" style="top:398px;font-size:12px;line-height:16px;color:#212121;letter-spacing:-0.305px;left:285.92px;">POCI Pin</div>
<div class="t" style="top:397px;font-size:12px;line-height:16px;color:#212121;letter-spacing:0.015px;left:479.52px;">DIO_8/14</div>
<div class="t" style="top:422px;font-size:12px;line-height:16px;color:#212121;letter-spacing:-0.305px;left:285.92px;">PICO Pin</div>
<div class="t" style="top:421px;font-size:12px;line-height:16px;color:#212121;letter-spacing:0.015px;left:479.52px;">DIO_9/15</div>
<div class="t" style="top:446px;font-size:12px;line-height:16px;color:#212121;letter-spacing:-0.144px;left:285.92px;">DMA RX Channel</div>
<div class="t" style="top:445px;font-size:12px;line-height:16px;color:#212121;letter-spacing:-0.263px;left:479.52px;">DMA_CH3</div>
<div class="t" style="top:470px;font-size:12px;line-height:16px;color:#212121;letter-spacing:-0.040px;left:285.92px;">DMA TX Channel</div>
<div class="t" style="top:469px;font-size:12px;line-height:16px;color:#212121;letter-spacing:-0.263px;left:479.52px;">DMA_CH4</div>
<div class="t" style="top:516px;font-size:12px;line-height:16px;color:#212121;font-weight:700;letter-spacing:-0.281px;left:281.72px;">SPI Clock configuration when not in use</div>
<div class="t" style="top:561px;font-size:12px;line-height:16px;color:#212121;font-weight:700;letter-spacing:-0.290px;left:281.72px;">SPI POCI configuration when not in use</div>
<div class="t" style="top:606px;font-size:12px;line-height:16px;color:#212121;font-weight:700;letter-spacing:-0.290px;left:281.72px;">SPI PICO configuration when not in use</div>
<div class="t" style="top:651px;font-size:12px;line-height:16px;color:#212121;font-weight:700;letter-spacing:-0.319px;left:281.72px;">Other Dependencies</div>
<div class="t" style="top:47px;font-size:12px;line-height:16px;color:#212121;letter-spacing:-0.336px;left:729.52px;">CC2674R10RGZ</div>
<div class="t" style="top:64px;font-size:12px;line-height:16px;color:#212121;letter-spacing:-0.027px;left:729.52px;">(Device)</div>
<div class="t" style="top:92px;font-size:10.5px;line-height:16px;color:#1a7d8f;letter-spacing:0.425px;-webkit-text-stroke:0.3px #1a7d8f;left:718.38px;">SWITCH</div>
<div class="t" style="top:363px;font-size:14px;line-height:20px;color:#212121;letter-spacing:-0.567px;left:708.84px;">GPIO Used</div>
<div class="t" style="top:363px;font-size:14px;line-height:20px;color:#212121;letter-spacing:-0.118px;left:889.04px;">13</div>
<div class="t" style="top:390px;font-size:14px;line-height:20px;color:#212121;letter-spacing:-0.202px;left:708.84px;">GPIO Available</div>
<div class="t" style="top:390px;font-size:14px;line-height:20px;color:#212121;letter-spacing:-0.118px;left:889.04px;">18</div>
<div class="a" style="left:2px;top:725px;width:1109px;height:2px;background:#fff"></div><div class="a" style="left:1110px;top:0;width:1px;height:727px;background:#fff"></div>
</body></html>
